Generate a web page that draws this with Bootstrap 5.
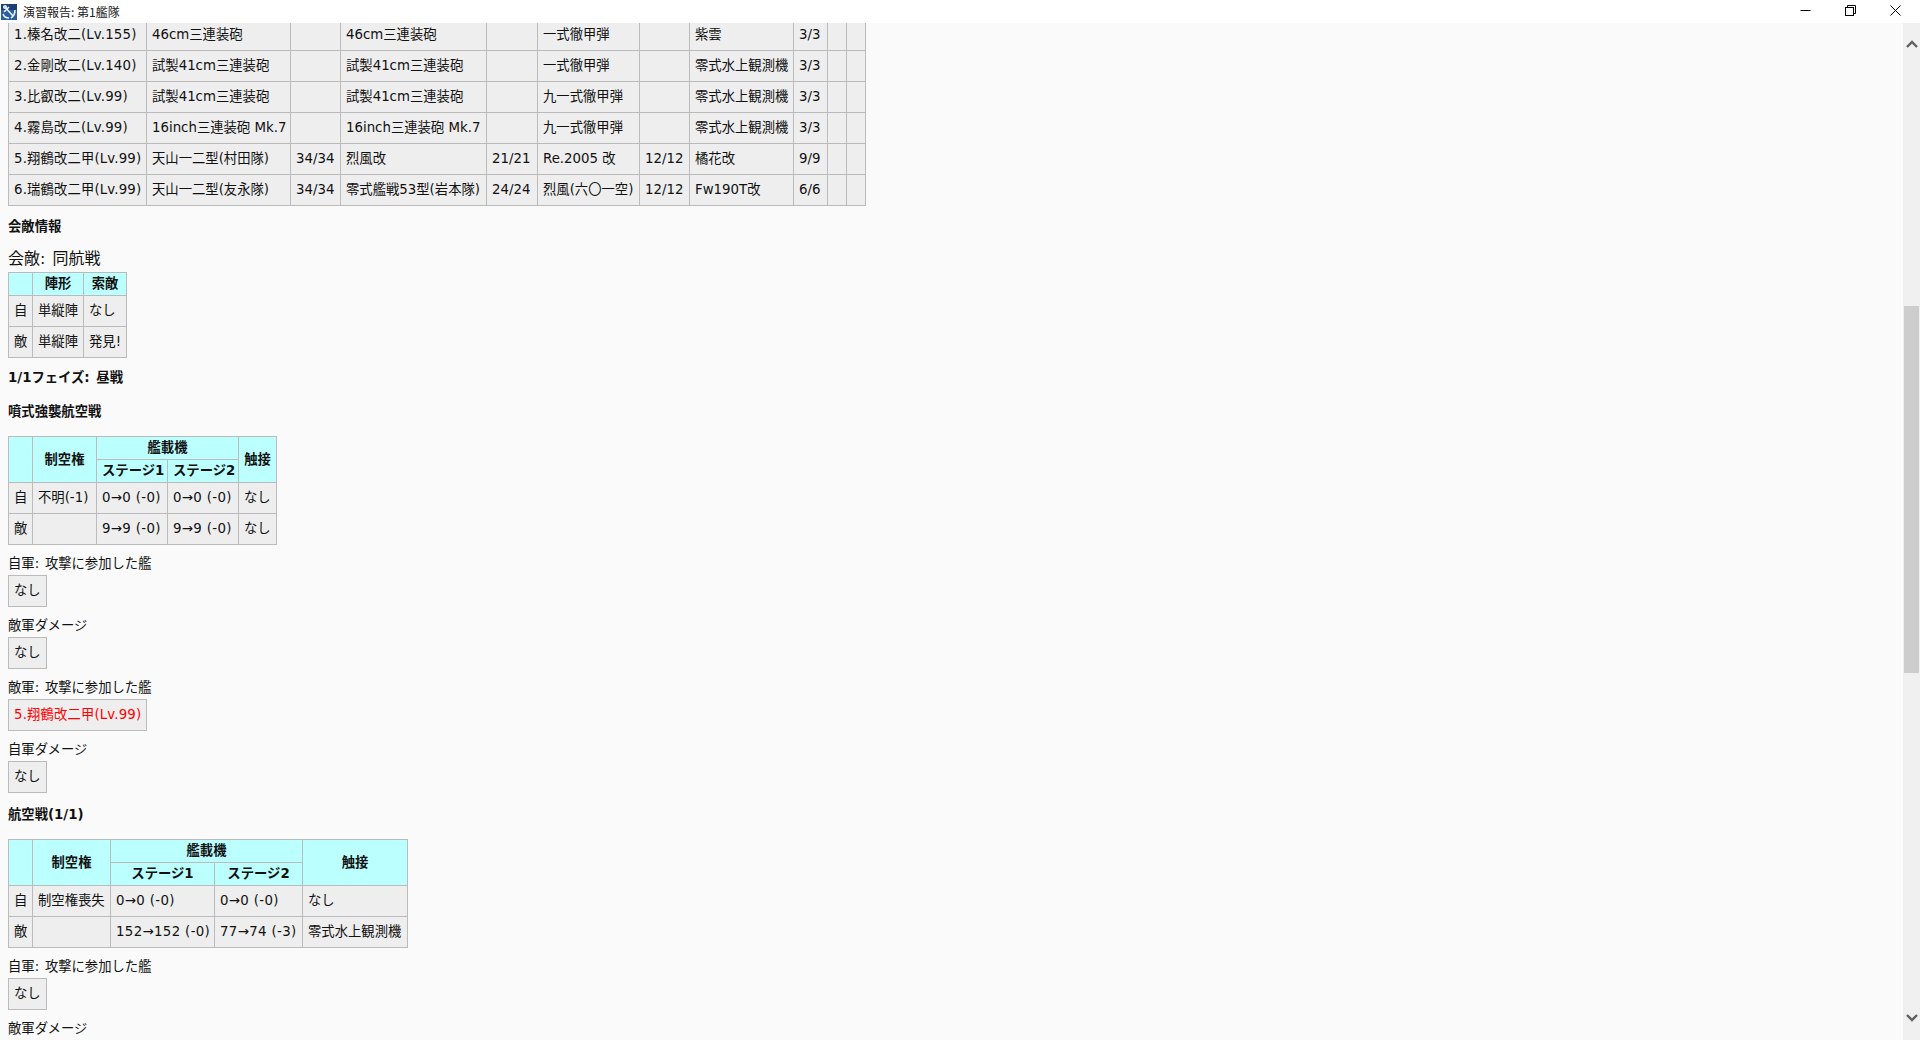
<!DOCTYPE html>
<html lang="ja">
<head>
    <meta charset="UTF-8">
    <title>演習報告: 第1艦隊</title>
    <link href="https://cdn.jsdelivr.net/npm/bootstrap@5.3.0/dist/css/bootstrap.min.css" rel="stylesheet">
    <style>
        html, body { height: 100%; overflow: hidden; }
        body { background: #fafafa; color: #111; font-family: "DejaVu Sans", "Noto Sans CJK JP", sans-serif; font-size: 13.33px; line-height: 18px; }
        .title-bar { height: 23px; background: #fff; }
        .title-text { font-family: "Noto Sans CJK JP", sans-serif; font-size: 12px; color: #222; margin-left: 5px; }
        .win-group { padding-right: 2px; padding-bottom: 3px; }
        .win-btn { width: 45px; height: 20px; }
        .report-area { height: 1017px; }
        .report-body { padding-left: 8px; }

        .kc-table { table-layout: fixed; border-collapse: collapse; margin-bottom: 0; --bs-table-bg: #eee; --bs-table-color: #111; --bs-border-color: #bbb; }
        .kc-table > :not(caption) > * > * { padding: 6px 5px; border: 1px solid #bbb; line-height: 18px; height: 31px; overflow: hidden; white-space: nowrap; }
        .kc-table > thead > tr > th { --bs-table-bg: #bbffff; padding: 2px 5px; height: 23px; text-align: center; font-weight: 700; vertical-align: middle; }
        .kc-table td.side-cell { text-align: center; }
        .kc-table td.flow-cell { letter-spacing: .35px; }

        #fleetTable { width: 858px; margin-top: -4px; }
        #fleetTable td:first-child { letter-spacing: .15px; }
        #formTable { width: 119px; }
        #jetTable { width: 269px; }
        #airTable { width: 400px; }
        .box-none { width: 39px; }
        .box-ship { width: 139px; }

        .sec-head { font-weight: 700; margin: 0; height: 18px; word-spacing: 2px; }
        .sub-line { margin: 0; height: 18px; word-spacing: 1.5px; }
        .engage-line { font-size: 16px; line-height: 19px; height: 23px; margin: 0; word-spacing: 2px; }
        .after-fleet { margin-top: 12px; margin-bottom: 13px; }
        .phase-head { margin-top: 11px; margin-bottom: 16px; }
        .jet-head { margin-bottom: 15px; }
        .air-head { margin-top: 13px; margin-bottom: 15px; }
        .first-sub { margin-top: 10px; }
        .next-sub { margin-top: 10px; }
        .box-table { margin-top: 2px; }
        .kc-table td.ship-hit { color: #f00; --bs-table-color: #f00; letter-spacing: .15px; }

        .fake-scroll { width: 17px; background: #f0f0f0; }
        .scroll-arrow { height: 17px; margin-top: 17px; }
        .scroll-thumb { width: 15px; height: 367px; margin: 249px auto 0; background: #cdcdcd; }
        .scroll-arrow-down { margin-top: 341px; }
    </style>
</head>
<body>
    <!-- window title bar -->
    <div class="title-bar d-flex align-items-center">
        <svg class="flex-shrink-0" width="18" height="18" viewBox="0 0 18 18">
            <rect x="1" y="1" width="16" height="16" fill="#2a5f9e"/>
            <rect x="1" y="1" width="16" height="6" fill="#1b3f73"/>
            <g fill="none" stroke="#e8f0f8" stroke-width="1.6">
                <path d="M5 4 13 13"/>
                <path d="M3 11c1 3 4 4 6 4M15 7c0 3-1 6-4 8"/>
                <circle cx="5" cy="4" r="1.3"/>
                <path d="M4 9 9 4"/>
            </g>
        </svg>
        <span class="title-text flex-grow-1">演習報告: 第1艦隊</span>
        <div class="win-group d-flex">
            <div class="win-btn d-flex align-items-center justify-content-center">
                <svg width="11" height="11" viewBox="0 0 11 11"><path d="M0.5 5.5h10" stroke="#000"/></svg>
            </div>
            <div class="win-btn d-flex align-items-center justify-content-center">
                <svg width="11" height="11" viewBox="0 0 11 11" fill="none" stroke="#000"><rect x="0.5" y="2.5" width="8" height="8"/><path d="M2.5 2.5v-2h8v8h-2"/></svg>
            </div>
            <div class="win-btn d-flex align-items-center justify-content-center">
                <svg width="11" height="11" viewBox="0 0 11 11" fill="none" stroke="#000"><path d="M0.5 0.5 10.5 10.5M10.5 0.5 0.5 10.5"/></svg>
            </div>
        </div>
    </div>

    <div class="report-area d-flex overflow-hidden">
        <div class="report-body flex-grow-1 overflow-hidden">

            <!-- fleet list, scrolled a little past its top -->
            <table class="table kc-table" id="fleetTable">
                <colgroup>
                    <col width="138"><col width="144"><col width="50"><col width="146"><col width="51"><col width="102"><col width="50"><col width="104"><col width="34"><col width="19"><col width="19">
                </colgroup>
                <tbody>
                    <tr><td>1.榛名改二(Lv.155)</td><td>46cm三連装砲</td><td></td><td>46cm三連装砲</td><td></td><td>一式徹甲弾</td><td></td><td>紫雲</td><td>3/3</td><td></td><td></td></tr>
                    <tr><td>2.金剛改二(Lv.140)</td><td>試製41cm三連装砲</td><td></td><td>試製41cm三連装砲</td><td></td><td>一式徹甲弾</td><td></td><td>零式水上観測機</td><td>3/3</td><td></td><td></td></tr>
                    <tr><td>3.比叡改二(Lv.99)</td><td>試製41cm三連装砲</td><td></td><td>試製41cm三連装砲</td><td></td><td>九一式徹甲弾</td><td></td><td>零式水上観測機</td><td>3/3</td><td></td><td></td></tr>
                    <tr><td>4.霧島改二(Lv.99)</td><td>16inch三連装砲 Mk.7</td><td></td><td>16inch三連装砲 Mk.7</td><td></td><td>九一式徹甲弾</td><td></td><td>零式水上観測機</td><td>3/3</td><td></td><td></td></tr>
                    <tr><td>5.翔鶴改二甲(Lv.99)</td><td>天山一二型(村田隊)</td><td>34/34</td><td>烈風改</td><td>21/21</td><td>Re.2005 改</td><td>12/12</td><td>橘花改</td><td>9/9</td><td></td><td></td></tr>
                    <tr><td>6.瑞鶴改二甲(Lv.99)</td><td>天山一二型(友永隊)</td><td>34/34</td><td>零式艦戦53型(岩本隊)</td><td>24/24</td><td>烈風(六〇一空)</td><td>12/12</td><td>Fw190T改</td><td>6/6</td><td></td><td></td></tr>
                </tbody>
            </table>

            <p class="sec-head after-fleet">会敵情報</p>
            <p class="engage-line">会敵: 同航戦</p>
            <table class="table kc-table" id="formTable">
                <colgroup><col width="24"><col width="51"><col width="43"></colgroup>
                <thead>
                    <tr><th></th><th>陣形</th><th>索敵</th></tr>
                </thead>
                <tbody>
                    <tr><td class="side-cell">自</td><td>単縦陣</td><td>なし</td></tr>
                    <tr><td class="side-cell">敵</td><td>単縦陣</td><td>発見!</td></tr>
                </tbody>
            </table>

            <p class="sec-head phase-head">1/1フェイズ: 昼戦</p>
            <p class="sec-head jet-head">噴式強襲航空戦</p>
            <table class="table kc-table" id="jetTable">
                <colgroup><col width="24"><col width="64"><col width="71"><col width="71"><col width="38"></colgroup>
                <thead>
                    <tr><th rowspan="2"></th><th rowspan="2">制空権</th><th colspan="2">艦載機</th><th rowspan="2">触接</th></tr>
                    <tr><th>ステージ1</th><th>ステージ2</th></tr>
                </thead>
                <tbody>
                    <tr><td class="side-cell">自</td><td>不明(-1)</td><td class="flow-cell">0→0 (-0)</td><td class="flow-cell">0→0 (-0)</td><td>なし</td></tr>
                    <tr><td class="side-cell">敵</td><td></td><td class="flow-cell">9→9 (-0)</td><td class="flow-cell">9→9 (-0)</td><td>なし</td></tr>
                </tbody>
            </table>

            <p class="sub-line first-sub">自軍: 攻撃に参加した艦</p>
            <table class="table kc-table box-table box-none"><tbody><tr><td>なし</td></tr></tbody></table>
            <p class="sub-line next-sub">敵軍ダメージ</p>
            <table class="table kc-table box-table box-none"><tbody><tr><td>なし</td></tr></tbody></table>
            <p class="sub-line next-sub">敵軍: 攻撃に参加した艦</p>
            <table class="table kc-table box-table box-ship"><tbody><tr><td class="ship-hit">5.翔鶴改二甲(Lv.99)</td></tr></tbody></table>
            <p class="sub-line next-sub">自軍ダメージ</p>
            <table class="table kc-table box-table box-none"><tbody><tr><td>なし</td></tr></tbody></table>

            <p class="sec-head air-head">航空戦(1/1)</p>
            <table class="table kc-table" id="airTable">
                <colgroup><col width="24"><col width="78"><col width="104"><col width="88"><col width="105"></colgroup>
                <thead>
                    <tr><th rowspan="2"></th><th rowspan="2">制空権</th><th colspan="2">艦載機</th><th rowspan="2">触接</th></tr>
                    <tr><th>ステージ1</th><th>ステージ2</th></tr>
                </thead>
                <tbody>
                    <tr><td class="side-cell">自</td><td>制空権喪失</td><td class="flow-cell">0→0 (-0)</td><td class="flow-cell">0→0 (-0)</td><td>なし</td></tr>
                    <tr><td class="side-cell">敵</td><td></td><td class="flow-cell">152→152 (-0)</td><td class="flow-cell">77→74 (-3)</td><td>零式水上観測機</td></tr>
                </tbody>
            </table>

            <p class="sub-line first-sub">自軍: 攻撃に参加した艦</p>
            <table class="table kc-table box-table box-none"><tbody><tr><td>なし</td></tr></tbody></table>
            <p class="sub-line next-sub">敵軍ダメージ</p>
        </div>

        <!-- scrollbar -->
        <div class="fake-scroll flex-shrink-0">
            <div class="scroll-arrow d-flex justify-content-center">
                <svg width="12" height="8" viewBox="0 0 12 8"><path d="M1 7 6 2l5 5" fill="none" stroke="#606060" stroke-width="2.4"/></svg>
            </div>
            <div class="scroll-thumb"></div>
            <div class="scroll-arrow scroll-arrow-down d-flex justify-content-center">
                <svg width="12" height="8" viewBox="0 0 12 8"><path d="M1 1l5 5 5-5" fill="none" stroke="#606060" stroke-width="2.4"/></svg>
            </div>
        </div>
    </div>

    <script src="https://cdn.jsdelivr.net/npm/bootstrap@5.3.0/dist/js/bootstrap.bundle.min.js"></script>
</body>
</html>
